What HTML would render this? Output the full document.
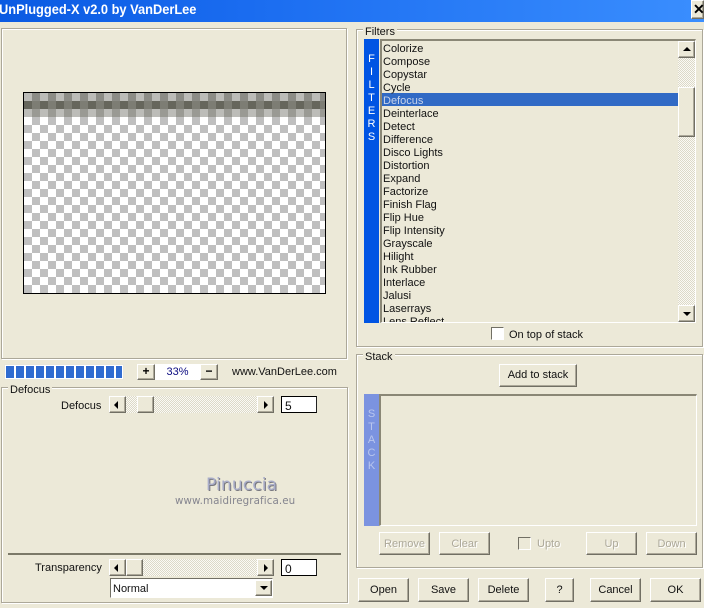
<!DOCTYPE html>
<html><head><meta charset="utf-8"><style>
html,body{margin:0;padding:0}
body{width:704px;height:608px;overflow:hidden;background:#ece9d8;position:relative;font:11px/13px "Liberation Sans",sans-serif;color:#111}
div,span.a{position:absolute;box-sizing:border-box}
.t{white-space:nowrap}
.g{border:1px solid #aca899;box-shadow:inset 1px 1px 0 #fff,1px 1px 0 #fff}
.lb{background:#ece9d8;padding:0 2px;white-space:nowrap}
.b{background:#ece9d8;border:1px solid;border-color:#fff #716f64 #716f64 #fff;box-shadow:inset -1px -1px 0 #aca899;text-align:center;white-space:nowrap}
.d{color:#aca899;text-shadow:1px 1px 0 #fff}
.s{background-color:#f6f4ec;background-image:repeating-conic-gradient(#dcd9c8 0 25%,#fbfaf5 0 50%);background-size:2px 2px}
.tri{width:0;height:0;border-style:solid;border-color:transparent}
.i{background:#fff;border:1px solid #000;border-right-color:#222;padding:3px 0 0 3px;font-size:12px}
</style></head><body>
<div style="left:0;top:0;width:704px;height:22px;background:linear-gradient(90deg,#0a5ae2 0,#1a6cf0 35%,#3a8efe 100%)"></div>
<div class="t" style="left:-1px;top:2px;font:bold 13.5px/16px 'Liberation Sans',sans-serif;color:#fff;transform-origin:0 0;transform:scaleX(.95)">UnPlugged-X v2.0 by VanDerLee</div>
<div class="b" style="left:691px;top:0;width:13px;height:19px;font:bold 14px/17px 'Liberation Sans',sans-serif;color:#000;text-align:left;padding-left:1px">✕</div>

<!-- preview -->
<div class="g" style="left:1px;top:28px;width:346px;height:331px"></div>
<div style="left:23px;top:92px;width:303px;height:202px;border:1px solid #000;overflow:hidden;background-color:#fff;background-image:repeating-conic-gradient(#bfbfbf 0 25%,#fff 0 50%);background-size:16px 16px;background-position:0 -8px">
 <div style="left:0;top:0;width:301px;height:8px;background:linear-gradient(90deg,#bcbcb8 50%,#8c8c86 50%) 0 0/16px 8px"></div>
 <div style="left:0;top:8px;width:301px;height:8px;background:linear-gradient(90deg,#66665c 50%,#7d7d74 50%) 0 0/16px 8px"></div>
 <div style="left:0;top:16px;width:301px;height:8px;background:linear-gradient(90deg,#bcbcb8 50%,#9a9a94 50%) 0 0/16px 8px"></div>
</div>

<!-- progress -->
<div style="left:4px;top:364px;width:120px;height:16px;background:#fff;border:1px solid #e8e6da"></div>
<div style="left:6px;top:366px;width:116px;height:12px;background:repeating-linear-gradient(90deg,#2f6bd0 0 8px,#fff 8px 10px)"></div>
<div class="b" style="left:137px;top:364px;width:18px;height:16px;font:bold 12px/13px 'Liberation Sans',sans-serif;color:#000">+</div>
<div style="left:155px;top:364px;width:45px;height:16px;background:#fff;color:#0b0b80;text-align:center;line-height:16px">33%</div>
<div class="b" style="left:200px;top:364px;width:18px;height:16px;font:bold 12px/13px 'Liberation Sans',sans-serif;color:#000">−</div>
<div class="t" style="left:232px;top:366px">www.VanDerLee.com</div>

<!-- defocus group -->
<div class="g" style="left:1px;top:387px;width:347px;height:216px"></div>
<div class="lb" style="left:8px;top:384px;line-height:12px">Defocus</div>
<div class="t" style="left:61px;top:400px">Defocus</div>
<div class="s" style="left:126px;top:396px;width:131px;height:17px"></div>
<div class="b" style="left:109px;top:396px;width:17px;height:17px"><div class="tri" style="left:4px;top:4px;border-width:4px 4px 4px 0;border-right-color:#000"></div></div>
<div class="b" style="left:137px;top:396px;width:17px;height:17px"></div>
<div class="b" style="left:257px;top:396px;width:17px;height:17px"><div class="tri" style="left:6px;top:4px;border-width:4px 0 4px 4px;border-left-color:#000"></div></div>
<div class="i" style="left:281px;top:396px;width:36px;height:17px">5</div>

<div class="t" style="left:206px;top:474px;font:17px/22px 'DejaVu Sans',sans-serif;color:#a9adc9;letter-spacing:.15px;text-shadow:1px 1px 0 #77777f">Pinuccia</div>
<div class="t" style="left:175px;top:495px;font:10.3px/13px 'DejaVu Sans',sans-serif;color:#85858f;letter-spacing:.1px">www.maidiregrafica.eu</div>

<div style="left:8px;top:553px;width:333px;height:2px;background:#7b7968"></div>
<div class="t" style="left:35px;top:562px">Transparency</div>
<div class="s" style="left:126px;top:559px;width:131px;height:17px"></div>
<div class="b" style="left:109px;top:559px;width:17px;height:17px"><div class="tri" style="left:4px;top:4px;border-width:4px 4px 4px 0;border-right-color:#000"></div></div>
<div class="b" style="left:126px;top:559px;width:17px;height:17px"></div>
<div class="b" style="left:257px;top:559px;width:17px;height:17px"><div class="tri" style="left:6px;top:4px;border-width:4px 0 4px 4px;border-left-color:#000"></div></div>
<div class="i" style="left:281px;top:559px;width:36px;height:17px">0</div>
<div style="left:110px;top:578px;width:163px;height:20px;background:#fff;border:1px solid;border-color:#716f64 #fff #fff #716f64;padding:4px 0 0 2px">Normal</div>
<div class="b" style="left:255px;top:580px;width:17px;height:16px"><div class="tri" style="left:4px;top:5px;border-width:4px 4px 0 4px;border-top-color:#000"></div></div>

<!-- filters -->
<div class="g" style="left:356px;top:29px;width:347px;height:318px"></div>
<div class="lb" style="left:363px;top:26px;line-height:12px">Filters</div>
<div style="left:364px;top:39px;width:15px;height:284px;background:#0054e3"></div>
<div style="left:364px;top:53px;width:15px;color:#fff;text-align:center;font-size:11px;line-height:13px">F<br>I<br>L<br>T<br>E<br>R<br>S</div>
<div style="left:380px;top:39px;width:316px;height:284px;border:1px solid;border-color:#8a8776 #fff #fff #8a8776;border-top-width:2px;border-left-width:2px;overflow:hidden">
 <div style="left:0;top:52px;width:296px;height:13px;background:#316ac5"></div>
 <div class="t" style="left:1px;top:2px;line-height:13px">Colorize<br>Compose<br>Copystar<br>Cycle<br><span style="color:#c9d4ea">Defocus</span><br>Deinterlace<br>Detect<br>Difference<br>Disco Lights<br>Distortion<br>Expand<br>Factorize<br>Finish Flag<br>Flip Hue<br>Flip Intensity<br>Grayscale<br>Hilight<br>Ink Rubber<br>Interlace<br>Jalusi<br>Laserrays<br>Lens Reflect</div>
 <div class="s" style="left:296px;top:0;width:17px;height:283px"></div>
 <div class="b" style="left:296px;top:0;width:17px;height:17px"><div class="tri" style="left:4px;top:5px;border-width:0 4px 4px 4px;border-bottom-color:#000"></div></div>
 <div class="b" style="left:296px;top:46px;width:17px;height:50px"></div>
 <div class="b" style="left:296px;top:264px;width:17px;height:17px"><div class="tri" style="left:4px;top:6px;border-width:4px 4px 0 4px;border-top-color:#000"></div></div>
</div>
<div style="left:491px;top:327px;width:13px;height:13px;background:#fff;border:1px solid;border-color:#716f64 #fff #fff #716f64"></div>
<div class="t" style="left:509px;top:329px">On top of stack</div>

<!-- stack -->
<div class="g" style="left:356px;top:354px;width:347px;height:214px"></div>
<div class="lb" style="left:363px;top:351px;line-height:12px">Stack</div>
<div class="b" style="left:499px;top:364px;width:78px;height:23px;line-height:21px">Add to stack</div>
<div style="left:364px;top:394px;width:15px;height:132px;background:#7b93e0"></div>
<div style="left:364px;top:408px;width:15px;color:#b9c6ee;text-align:center;font-size:11px;line-height:13px">S<br>T<br>A<br>C<br>K</div>
<div style="left:379px;top:394px;width:318px;height:132px;border:1px solid;border-color:#8a8776 #fff #fff #8a8776;border-top-width:2px;border-left-width:2px"></div>
<div class="b d" style="left:379px;top:532px;width:51px;height:23px;line-height:22px">Remove</div>
<div class="b d" style="left:439px;top:532px;width:51px;height:23px;line-height:22px">Clear</div>
<div style="left:518px;top:537px;width:13px;height:13px;border:1px solid;border-color:#716f64 #fff #fff #716f64"></div>
<div class="t d" style="left:537px;top:538px">Upto</div>
<div class="b d" style="left:586px;top:532px;width:51px;height:23px;line-height:22px">Up</div>
<div class="b d" style="left:646px;top:532px;width:51px;height:23px;line-height:22px">Down</div>

<!-- bottom buttons -->
<div class="b" style="left:358px;top:578px;width:51px;height:24px;line-height:23px">Open</div>
<div class="b" style="left:418px;top:578px;width:51px;height:24px;line-height:23px">Save</div>
<div class="b" style="left:478px;top:578px;width:51px;height:24px;line-height:23px">Delete</div>
<div class="b" style="left:545px;top:578px;width:29px;height:24px;line-height:23px">?</div>
<div class="b" style="left:590px;top:578px;width:51px;height:24px;line-height:23px">Cancel</div>
<div class="b" style="left:650px;top:578px;width:51px;height:24px;line-height:23px">OK</div>
</body></html>
